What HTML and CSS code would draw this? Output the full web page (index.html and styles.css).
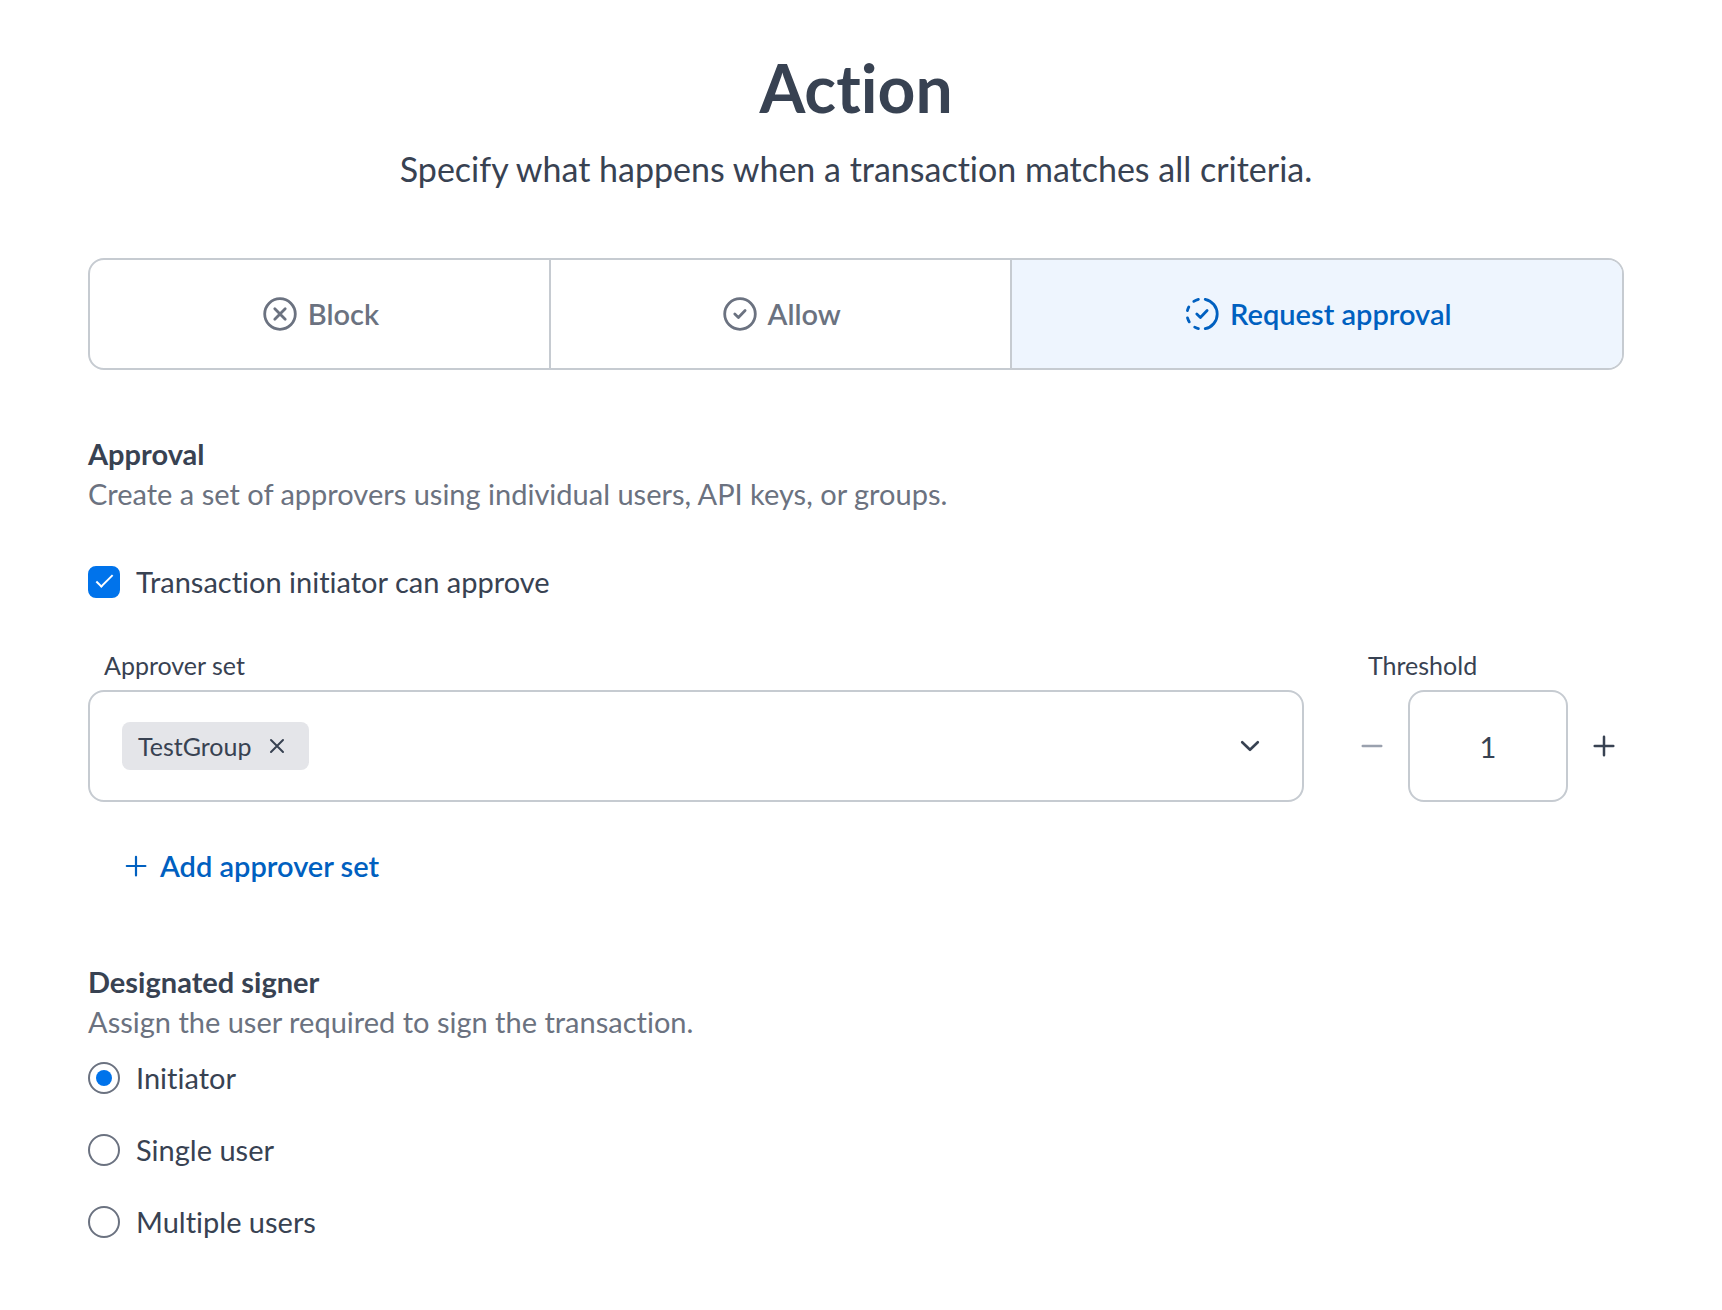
FILE: index.html
```html
<!DOCTYPE html>
<html lang="en">
<head>
  <meta charset="utf-8">
  <meta name="viewport" content="width=device-width, initial-scale=1">
  <title>Action</title>
  <link rel="stylesheet" href="styles.css">
</head>
<body>
  <main class="page">
    <header class="page-header">
      <h1 class="page-title">Action</h1>
      <p class="page-subtitle">Specify what happens when a transaction matches all criteria.</p>
    </header>

    <div class="segments" role="group" aria-label="Action">
      <button type="button" class="segment" aria-pressed="false">
        <svg class="icon" viewBox="0 0 40 40" aria-hidden="true" stroke-width="2.8">
          <circle cx="20" cy="20" r="15.3"/>
          <path d="M14.8 14.8l10.4 10.4M25.2 14.8L14.8 25.2"/>
        </svg>
        <span>Block</span>
      </button>
      <button type="button" class="segment" aria-pressed="false">
        <svg class="icon" viewBox="0 0 40 40" aria-hidden="true" stroke-width="2.8">
          <circle cx="20" cy="20" r="15.3"/>
          <path d="M14.8 20l3.6 3.4 6.7-6.9"/>
        </svg>
        <span>Allow</span>
      </button>
      <button type="button" class="segment segment-active" aria-pressed="true">
        <svg class="icon" viewBox="0 0 40 40" aria-hidden="true" stroke-width="2.8">
          <path d="M23.2 5.3A15 15 0 0 1 23.2 34.7"/>
          <path d="M16.4 5.4A15 15 0 0 0 11.8 7.4M6.8 13A15 15 0 0 0 5.4 16.6M5.5 23.9A15 15 0 0 0 7.3 27.9M12.7 33.1A15 15 0 0 0 16.4 34.6"/>
          <path d="M14.8 20l3.6 3.4 6.7-6.9"/>
        </svg>
        <span>Request approval</span>
      </button>
    </div>

    <section class="section">
      <h2 class="section-title">Approval</h2>
      <p class="section-text">Create a set of approvers using individual users, API keys, or groups.</p>

      <label class="choice choice-initiator">
        <input class="checkbox" type="checkbox" checked>
        <span>Transaction initiator can approve</span>
      </label>

      <div class="approver-row">
        <div class="approver-field" role="group" aria-labelledby="approver-label">
          <span class="field-label" id="approver-label">Approver set</span>
          <div class="combo">
            <span class="chip">
              <span>TestGroup</span>
              <button type="button" class="icon-button chip-remove" aria-label="Remove TestGroup">
                <svg class="icon" viewBox="0 0 32 32" aria-hidden="true" stroke-width="2">
                  <path d="M10 10l12 12M22 10L10 22"/>
                </svg>
              </button>
            </span>
            <button type="button" class="icon-button" aria-label="Show approvers">
              <svg class="icon" viewBox="0 0 40 40" aria-hidden="true" stroke-width="2.6">
                <path d="M12.2 16.2l7.8 7.6 7.8-7.6"/>
              </svg>
            </button>
          </div>
        </div>

        <div class="threshold-field">
          <label class="field-label" for="threshold">Threshold</label>
          <div class="stepper">
            <button type="button" class="icon-button" aria-label="Decrease threshold" disabled>
              <svg class="icon" viewBox="0 0 40 40" aria-hidden="true" stroke-width="2.4">
                <path d="M10.7 20h18.6"/>
              </svg>
            </button>
            <input class="threshold-input" id="threshold" type="text" inputmode="numeric" value="1">
            <button type="button" class="icon-button" aria-label="Increase threshold">
              <svg class="icon" viewBox="0 0 40 40" aria-hidden="true" stroke-width="2.5">
                <path d="M10.7 20h18.6M20 10.7v18.6"/>
              </svg>
            </button>
          </div>
        </div>
      </div>

      <button type="button" class="add-button">
        <svg class="icon icon-small" viewBox="0 0 32 32" aria-hidden="true" stroke-width="2.2">
          <path d="M6.8 16h18.6M16 6.8v18.6"/>
        </svg>
        <span>Add approver set</span>
      </button>
    </section>

    <section class="section" role="radiogroup" aria-labelledby="signer-title">
      <h2 class="section-title" id="signer-title">Designated signer</h2>
      <p class="section-text">Assign the user required to sign the transaction.</p>

      <div class="radio-list">
        <label class="choice">
          <input class="radio" type="radio" name="signer" checked>
          <span>Initiator</span>
        </label>
        <label class="choice">
          <input class="radio" type="radio" name="signer">
          <span>Single user</span>
        </label>
        <label class="choice">
          <input class="radio" type="radio" name="signer">
          <span>Multiple users</span>
        </label>
      </div>
    </section>
  </main>
</body>
</html>
```
FILE: styles.css
```css
:root {
  --text: #384252;
  --muted: #6b7280;
  --faint: #9aa1ae;
  --line: #c6cbd1;
  --blue: #0060c0;
  --blue-bright: #0073eb;
  --blue-soft: #eef5fe;
  --chip: #e4e5e9;
}

*,
*::before {
  box-sizing: border-box;
}

body {
  margin: 0;
  background: #fff;
  color: var(--text);
  font-family: Lato, "Open Sans", sans-serif;
  font-size: 29px;
  font-variant-ligatures: none;
  line-height: 40px;
}

h1,
h2,
p {
  margin: 0;
}

button,
input {
  margin: 0;
  color: inherit;
  font: inherit;
  font-variant-ligatures: inherit;
}

button {
  padding: 0;
  border: 0;
  background: none;
  cursor: pointer;
}

.page {
  padding: 48px 98px 64px 88px;
}

.page-header {
  display: flex;
  flex-direction: column;
  gap: 16px;
  margin-bottom: 64px;
  text-align: center;
}

.page-title {
  font-size: 66px;
  line-height: 80px;
}

.page-subtitle {
  font-size: 34px;
  line-height: 50px;
}

.icon {
  display: block;
  flex: none;
  width: 40px;
  height: 40px;
  fill: none;
  stroke: currentColor;
  stroke-linecap: round;
  stroke-linejoin: round;
}

.icon-small {
  width: 32px;
  height: 32px;
}

.segments {
  display: grid;
  grid-template-columns: 151fr 151fr 200fr;
  height: 112px;
  overflow: hidden;
  border: 2px solid var(--line);
  border-radius: 16px;
}

.segment {
  display: flex;
  align-items: center;
  justify-content: center;
  gap: 8px;
  color: var(--muted);
  font-weight: 600;
}

.segment:not(:last-child) {
  border-right: 2px solid var(--line);
}

.segment-active {
  background: var(--blue-soft);
  color: var(--blue);
}

.section {
  margin-top: 64px;
}

.section-title {
  font-size: 29px;
}

.section-text {
  color: var(--muted);
}

.choice {
  display: flex;
  align-items: center;
  gap: 16px;
  width: fit-content;
}

.choice-initiator {
  margin: 48px 0 44px;
}

.checkbox,
.radio {
  display: grid;
  flex: none;
  place-items: center;
  width: 32px;
  height: 32px;
  border: 2px solid var(--muted);
  background: #fff;
  appearance: none;
}

.checkbox {
  border-radius: 8px;
}

.checkbox:checked {
  border-color: var(--blue-bright);
  background: var(--blue-bright);
}

.checkbox:checked::before {
  width: 17px;
  height: 8px;
  margin-bottom: 6px;
  border: solid #fff;
  border-width: 0 0 2px 2px;
  content: "";
  transform: rotate(-45deg);
}

.radio {
  border-radius: 50%;
}

.radio:checked::before {
  width: 16px;
  height: 16px;
  border-radius: 50%;
  background: var(--blue-bright);
  content: "";
}

.approver-row {
  display: flex;
  gap: 48px;
}

.approver-field {
  flex: 1;
}

.field-label {
  display: block;
  margin-bottom: 6px;
  padding-left: 16px;
  font-size: 25px;
  line-height: 38px;
}

.combo {
  display: flex;
  align-items: center;
  justify-content: space-between;
  min-height: 112px;
  padding: 0 32px;
  border: 2px solid var(--line);
  border-radius: 16px;
}

.chip {
  display: flex;
  align-items: center;
  gap: 10px;
  height: 48px;
  padding: 0 16px;
  border-radius: 8px;
  background: var(--chip);
  font-size: 25px;
}

.chip-remove .icon {
  width: 32px;
  height: 32px;
}

.icon-button:disabled {
  color: var(--faint);
  cursor: default;
}

.stepper {
  display: flex;
  align-items: center;
  gap: 16px;
}

.threshold-input {
  width: 160px;
  height: 112px;
  padding: 0;
  border: 2px solid var(--line);
  border-radius: 16px;
  background: #fff;
  text-align: center;
}

.add-button {
  display: flex;
  align-items: center;
  gap: 8px;
  height: 64px;
  margin-top: 32px;
  padding: 0 32px;
  color: var(--blue);
  font-weight: 600;
}

.radio-list {
  display: flex;
  flex-direction: column;
  gap: 32px;
  margin-top: 16px;
}
```
